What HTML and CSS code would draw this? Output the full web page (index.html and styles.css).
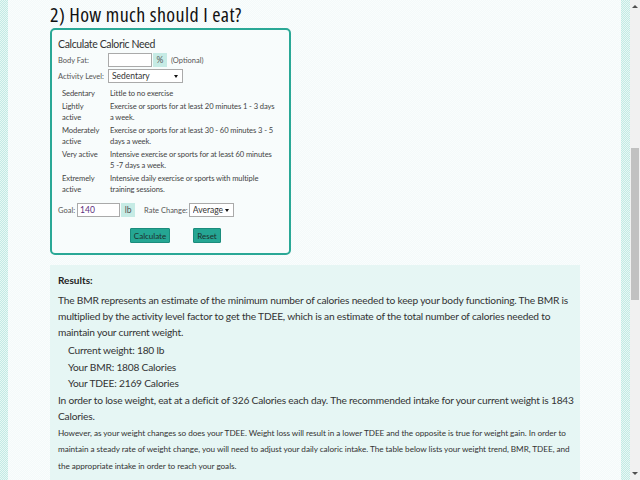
FILE: index.html
```html
<!DOCTYPE html>
<html lang="en">
<head>
<meta charset="utf-8">
<title>How much should I eat?</title>
<link rel="stylesheet" href="styles.css">
</head>
<body>
<div class="window">
  <div class="page">
    <main class="sheet">
      <h2 class="heading">2) How much should I eat?</h2>
      <form class="calc">
        <div class="calc-title">Calculate Caloric Need</div>
        <div class="row">
          <label class="lbl">Body Fat:</label>
          <input class="field fat" type="text" value="">
          <span class="unit">%</span>
          <span class="hint">(Optional)</span>
        </div>
        <div class="row">
          <label class="lbl">Activity Level:</label>
          <span class="select activity"><select><option>Sedentary</option></select></span>
        </div>
        <table class="levels">
          <tr><td class="lv">Sedentary</td><td class="ds">Little to no exercise</td></tr>
          <tr><td class="lv">Lightly active</td><td class="ds">Exercise or sports for at least 20 minutes 1 - 3 days a week.</td></tr>
          <tr><td class="lv">Moderately active</td><td class="ds">Exercise or sports for at least 30 - 60 minutes 3 - 5 days a week.</td></tr>
          <tr><td class="lv">Very active</td><td class="ds">Intensive exercise or sports for at least 60 minutes 5&nbsp;-7 days a week.</td></tr>
          <tr><td class="lv">Extremely active</td><td class="ds">Intensive daily exercise or sports with multiple training sessions.</td></tr>
        </table>
        <div class="row goal">
          <label class="lbl short">Goal:</label>
          <input class="field goal-in" type="text" value="140">
          <span class="unit">lb</span>
          <label class="lbl rate">Rate Change:</label>
          <span class="select ratesel"><select><option>Average</option></select></span>
        </div>
        <div class="actions">
          <button type="button" class="btn calc-btn">Calculate</button>
          <button type="button" class="btn reset-btn">Reset</button>
        </div>
      </form>
      <section class="results">
        <h3 class="res-title">Results:</h3>
        <p class="txt">The BMR represents an estimate of the minimum number of calories needed to keep your body functioning. The BMR is multiplied by the activity level factor to get the TDEE, which is an estimate of the total number of calories needed to maintain your current weight.</p>
        <ul class="stats">
          <li>Current weight: 180 lb</li>
          <li>Your BMR: 1808 Calories</li>
          <li>Your TDEE: 2169 Calories</li>
        </ul>
        <p class="txt">In order to lose weight, eat at a deficit of 326 Calories each day. The recommended intake for your current weight is 1843 Calories.</p>
        <p class="small">However, as your weight changes so does your TDEE. Weight loss will result in a lower TDEE and the opposite is true for weight gain. In order to maintain a steady rate of weight change, you will need to adjust your daily caloric intake. The table below lists your weight trend, BMR, TDEE, and the appropriate intake in order to reach your goals.</p>
      </section>
    </main>
  </div>
  <div class="scrollbar">
    <span class="sb-arrow up"></span>
    <div class="sb-track"><div class="sb-thumb"></div></div>
    <span class="sb-arrow down"></span>
  </div>
</div>
</body>
</html>
```

FILE: styles.css
```css
html, body {
  margin: 0;
  padding: 0;
  height: 100%;
  overflow: hidden;
}
body {
  font-family: Lato, "Open Sans", sans-serif;
  color: #333;
}
.window {
  display: flex;
  height: 480px;
}
.page {
  flex: 1;
  display: flex;
  padding: 0 9px 0 8px;
  background-color: #d6f1ed;
  background-image: repeating-conic-gradient(#c2eae4 0 25%, #e8f8f5 0 50%);
  background-size: 2px 2px;
}
.sheet {
  flex: 1;
  padding-left: 42px;
  background-color: #f7fcfc;
  background-image: repeating-conic-gradient(#f3fafa 0 25%, #fafdfd 0 50%);
  background-size: 2px 2px;
  overflow: hidden;
}
.heading {
  margin: 3px 0 2px;
  font-family: "Open Sans", "Liberation Sans", sans-serif;
  font-stretch: 75%;
  font-weight: normal;
  font-size: 20px;
  letter-spacing: 0.4px;
  line-height: 23px;
  color: #111;
}
.calc {
  height: 223px;
  border: 2px solid #2aa896;
  border-radius: 5px;
  padding: 0 0 0 6px;
  box-sizing: content-box;
  width: 231px;
  background: #f8fcfc;
}
.calc-title {
  font-size: 10.5px;
  letter-spacing: -0.35px;
  line-height: 15px;
  padding-top: 7px;
  color: #333;
}
.row {
  display: flex;
  align-items: center;
  height: 14px;
  margin-top: 2px;
  font-size: 7.5px;
  color: #555;
}
.calc-title + .row { margin-top: 1px; }
.lbl {
  width: 50px;
  flex: none;
  white-space: nowrap;
}
.field {
  box-sizing: border-box;
  height: 14px;
  border: 1px solid #aaa;
  background: #fff;
  padding: 0 2px;
  font: inherit;
  font-size: 8.5px;
  color: #5b2f7e;
  margin: 0;
}
.fat { width: 44px; }
.unit {
  width: 14px;
  height: 14px;
  margin-left: 1px;
  background: #c6ebe5;
  display: flex;
  align-items: center;
  justify-content: center;
  font-size: 8.5px;
  color: #555;
}
.hint { margin-left: 4px; }
.select {
  position: relative;
  display: block;
  height: 14px;
}
.select select {
  appearance: none;
  -webkit-appearance: none;
  box-sizing: border-box;
  width: 100%;
  height: 14px;
  border: 1px solid #aaa;
  border-radius: 0;
  background: #fff;
  padding: 0 3px;
  font: inherit;
  font-size: 8.5px;
  color: #333;
  margin: 0;
}
.select::after {
  content: "";
  position: absolute;
  right: 5px;
  top: 6px;
  border-left: 2px solid transparent;
  border-right: 2px solid transparent;
  border-top: 3px solid #111;
}
.activity { width: 75px; }
.levels {
  border-collapse: collapse;
  margin: 4px 0 0 4px;
  font-size: 7.6px;
  letter-spacing: -0.1px;
  line-height: 11px;
  color: #444;
}
.levels td {
  padding: 1px 0;
  vertical-align: top;
}
.levels .lv {
  width: 40px;
  padding-right: 8px;
}
.ds { width: 168px; }
.goal { margin-top: 7px; }
.short { width: auto; margin-right: 2px; }
.goal-in { width: 43px; }
.rate { width: auto; margin-left: 9px; margin-right: 1px; }
.ratesel { width: 45px; }
.actions {
  display: flex;
  gap: 23px;
  padding-left: 72px;
  margin-top: 11px;
}
.btn {
  height: 15px;
  padding: 0;
  border: 1px solid #1b8c7c;
  border-radius: 1px;
  background: #25a693;
  font: inherit;
  font-size: 8px;
  color: #1d2f2c;
}
.calc-btn { width: 40px; }
.reset-btn { width: 28px; }
.results {
  width: 518px;
  margin-top: 10px;
  padding: 8px 4px 10px 8px;
  background: #e6f6f4;
  font-size: 10.2px;
  letter-spacing: -0.2px;
  color: #333;
}
.res-title {
  margin: 0 0 4px;
  font-size: 10px;
  font-weight: bold;
  letter-spacing: 0;
  line-height: 15px;
  color: #222;
}
.txt {
  margin: 0;
  line-height: 16px;
}
.stats {
  list-style: none;
  margin: 2px 0 0;
  padding-left: 10px;
  line-height: 16.5px;
}
.small {
  margin: 1px 0 0;
  font-size: 8.2px;
  letter-spacing: -0.05px;
  line-height: 16.5px;
}
.scrollbar {
  width: 10px;
  background: #f1f1f1;
  display: flex;
  flex-direction: column;
  align-items: center;
}
.sb-arrow {
  width: 0;
  height: 0;
  border-left: 3px solid transparent;
  border-right: 3px solid transparent;
  flex: none;
}
.sb-arrow.up {
  margin-top: 5px;
  border-bottom: 3px solid #505050;
}
.sb-arrow.down {
  margin-bottom: 5px;
  border-top: 3px solid #505050;
}
.sb-track {
  flex: 1;
  width: 100%;
  display: flex;
  justify-content: center;
}
.sb-thumb {
  width: 8px;
  height: 152px;
  margin-top: 140px;
  background: #c1c1c1;
}
```
